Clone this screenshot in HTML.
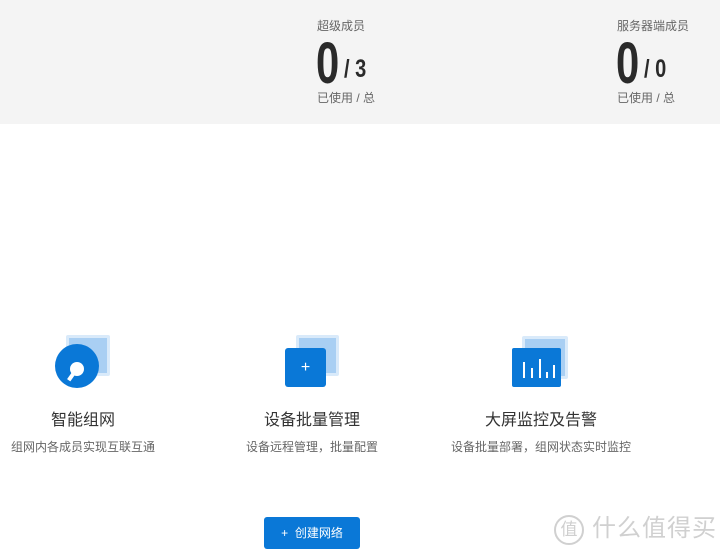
<!DOCTYPE html>
<html><head><meta charset="utf-8"><style>
body{margin:0;width:720px;height:557px;background:#fff;position:relative;overflow:hidden;font-family:"Liberation Sans","Noto Sans CJK SC",sans-serif;color:#333}
.top{position:absolute;left:0;top:0;width:720px;height:124px;background:#f4f4f4}
.lab{position:absolute;font-size:12px;color:#666;line-height:14px}
.big{position:absolute;font-family:"Liberation Sans Narrow","Liberation Sans",sans-serif;font-weight:bold;color:#2a2a2a;line-height:1}
.t{position:absolute;width:240px;text-align:center;font-size:16px;color:#333;line-height:20px}
.s{position:absolute;width:240px;text-align:center;font-size:12px;color:#666;line-height:16px}
.bk{position:absolute;background:#a9cff3;border:3px solid #d9eafa;box-sizing:border-box;border-radius:2px}
.fr{position:absolute;background:#0a78d7;border-radius:3px}
</style></head><body>
<div class="top"></div>
<div class="lab" style="left:317px;top:19px">超级成员</div>
<div class="big" style="left:316px;top:35px;font-size:58px;transform:scaleX(.72);transform-origin:left">0</div>
<div class="big" style="left:344px;top:57px;font-size:25px;transform:scaleX(.8);transform-origin:left">/ 3</div>
<div class="lab" style="left:317px;top:91px">已使用 / 总</div>
<div class="lab" style="left:617px;top:19px">服务器端成员</div>
<div class="big" style="left:616px;top:35px;font-size:58px;transform:scaleX(.72);transform-origin:left">0</div>
<div class="big" style="left:644px;top:57px;font-size:25px;transform:scaleX(.8);transform-origin:left">/ 0</div>
<div class="lab" style="left:617px;top:91px">已使用 / 总</div>

<div class="bk" style="left:66px;top:335px;width:44px;height:41px"></div>
<svg style="position:absolute;left:54px;top:343px" width="46" height="46"><circle cx="23" cy="23" r="22" fill="#0a78d7"/><circle cx="23" cy="26" r="7" fill="#fff"/><rect x="15" y="30" width="4" height="8" fill="#fff" transform="rotate(35 17 34)"/></svg>
<div class="t" style="left:-37px;top:411px">智能组网</div>
<div class="s" style="left:-37px;top:439px">组网内各成员实现互联互通</div>

<div class="bk" style="left:296px;top:335px;width:43px;height:41px"></div>
<div class="fr" style="left:285px;top:348px;width:41px;height:39px;color:#fff;text-align:center;line-height:39px;font-size:16px">+</div>
<div class="t" style="left:192px;top:411px">设备批量管理</div>
<div class="s" style="left:192px;top:439px">设备远程管理，批量配置</div>

<div class="bk" style="left:522px;top:336px;width:46px;height:43px"></div>
<div class="fr" style="left:512px;top:348px;width:49px;height:39px;border-radius:2px"></div>
<svg style="position:absolute;left:512px;top:348px" width="49" height="39"><g stroke="#fff" stroke-width="2"><line x1="12" y1="14" x2="12" y2="30"/><line x1="20" y1="20" x2="20" y2="30"/><line x1="28" y1="11" x2="28" y2="30"/><line x1="35" y1="24" x2="35" y2="30"/><line x1="42" y1="17" x2="42" y2="30"/></g></svg>
<div class="t" style="left:421px;top:411px">大屏监控及告警</div>
<div class="s" style="left:421px;top:439px">设备批量部署，组网状态实时监控</div>

<div style="position:absolute;left:264px;top:517px;width:96px;height:32px;background:#0a78d7;border-radius:3px;color:#fff;font-size:12px;line-height:32px;text-align:center">+&nbsp; 创建网络</div>

<div style="position:absolute;left:554px;top:515px;width:30px;height:30px;border:2px solid #d0d0d0;border-radius:50%;box-sizing:border-box;color:#cfcfcf;font-size:17px;line-height:26px;text-align:center">值</div>
<div style="position:absolute;left:592px;top:514px;font-size:24px;color:#d0d0d0;line-height:30px;letter-spacing:1px">什么值得买</div>
</body></html>
